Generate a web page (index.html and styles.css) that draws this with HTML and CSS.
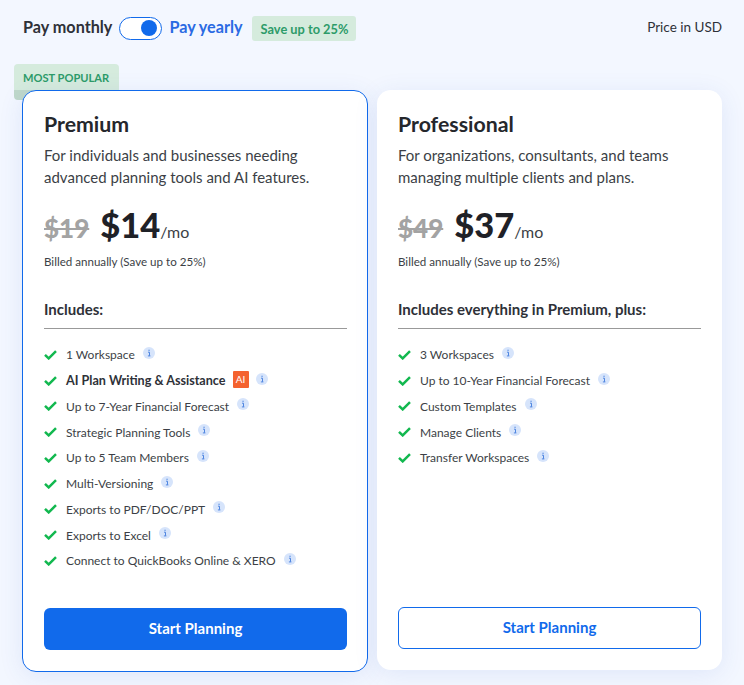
FILE: index.html
```html
<!DOCTYPE html>
<html lang="en">
<head>
    <meta charset="UTF-8">
    <title>Pricing</title>
    <link rel="stylesheet" href="styles.css">
</head>
<body>
<svg class="defs" width="0" height="0">
    <symbol id="check" viewBox="0 0 13 10"><path d="M1 4.8 4.7 8.4 12 1.2" fill="none" stroke="#12b84f" stroke-width="2.5"/></symbol>
    <symbol id="info" viewBox="0 0 12 12"><circle cx="6" cy="6" r="6" fill="#d6e4fb"/><path d="M5 5.2h1.5v3.6M4.9 8.9h2.5" fill="none" stroke="#4f86e0" stroke-width="1"/><rect x="5.5" y="2.7" width="1.1" height="1.2" fill="#4f86e0"/></symbol>
</svg>

<div class="topbar">
    <span class="pay_label">Pay monthly</span>
    <span class="toggle"><span class="toggle_dot"></span></span>
    <span class="pay_label pay_active">Pay yearly</span>
    <span class="save_tag">Save up to 25%</span>
    <span class="currency">Price in USD</span>
</div>

<div class="plans">
    <div class="plan plan_main">
        <span class="popular">MOST POPULAR</span>
        <h2>Premium</h2>
        <p class="desc">For individuals and businesses needing advanced planning tools and AI features.</p>
        <div class="price"><s>$19</s><b>$14</b><span>/mo</span></div>
        <p class="billed">Billed annually (Save up to 25%)</p>
        <h3>Includes:</h3>
        <ul>
            <li><svg class="ck"><use href="#check"/></svg>1 Workspace<svg class="inf"><use href="#info"/></svg></li>
            <li class="strong"><svg class="ck"><use href="#check"/></svg>AI Plan Writing &amp; Assistance<span class="ai">AI</span><svg class="inf"><use href="#info"/></svg></li>
            <li><svg class="ck"><use href="#check"/></svg>Up to 7-Year Financial Forecast<svg class="inf"><use href="#info"/></svg></li>
            <li><svg class="ck"><use href="#check"/></svg>Strategic Planning Tools<svg class="inf"><use href="#info"/></svg></li>
            <li><svg class="ck"><use href="#check"/></svg>Up to 5 Team Members<svg class="inf"><use href="#info"/></svg></li>
            <li><svg class="ck"><use href="#check"/></svg>Multi-Versioning<svg class="inf"><use href="#info"/></svg></li>
            <li><svg class="ck"><use href="#check"/></svg>Exports to PDF/DOC/PPT<svg class="inf"><use href="#info"/></svg></li>
            <li><svg class="ck"><use href="#check"/></svg>Exports to Excel<svg class="inf"><use href="#info"/></svg></li>
            <li><svg class="ck"><use href="#check"/></svg>Connect to QuickBooks Online &amp; XERO<svg class="inf"><use href="#info"/></svg></li>
        </ul>
        <a class="btn btn_fill" href="#">Start Planning</a>
    </div>

    <div class="plan">
        <h2>Professional</h2>
        <p class="desc">For organizations, consultants, and teams managing multiple clients and plans.</p>
        <div class="price"><s>$49</s><b>$37</b><span>/mo</span></div>
        <p class="billed">Billed annually (Save up to 25%)</p>
        <h3>Includes everything in Premium, plus:</h3>
        <ul>
            <li><svg class="ck"><use href="#check"/></svg>3 Workspaces<svg class="inf"><use href="#info"/></svg></li>
            <li><svg class="ck"><use href="#check"/></svg>Up to 10-Year Financial Forecast<svg class="inf"><use href="#info"/></svg></li>
            <li><svg class="ck"><use href="#check"/></svg>Custom Templates<svg class="inf"><use href="#info"/></svg></li>
            <li><svg class="ck"><use href="#check"/></svg>Manage Clients<svg class="inf"><use href="#info"/></svg></li>
            <li><svg class="ck"><use href="#check"/></svg>Transfer Workspaces<svg class="inf"><use href="#info"/></svg></li>
        </ul>
        <a class="btn btn_line" href="#">Start Planning</a>
    </div>
</div>
</body>
</html>
```
FILE: styles.css
```css
*{
    margin: 0;
    padding: 0;
    box-sizing: border-box;
}
body{
    background-color: #f3f7ff;
    font-family: "Lato", "Noto Sans", sans-serif;
    color: #2e3138;
    height: 685px;
    overflow: hidden;
}
.defs{
    display: block;
    height: 0;
}

.topbar{
    display: flex;
    align-items: center;
    height: 28px;
    margin: 14px 22px 0 23px;
}
.pay_label{
    padding-bottom: 3px;
    font-size: 16.2px;
    font-weight: 700;
}
.pay_active{
    color: #2a6ae3;
}
.toggle{
    display: flex;
    align-items: center;
    justify-content: flex-end;
    width: 43px;
    height: 23px;
    margin: 0 7px;
    padding-right: 4px;
    background-color: white;
    border: 1px solid #116aeb;
    border-radius: 12px;
}
.toggle_dot{
    width: 16px;
    height: 16px;
    background-color: #116aeb;
    border-radius: 50%;
}
.save_tag{
    display: flex;
    align-items: center;
    height: 25px;
    margin-left: 9px;
    padding: 2px 8px 0 9px;
    background-color: #d5ebdd;
    border-radius: 3px;
    color: #2d9b69;
    font-size: 12.8px;
    font-weight: 700;
}
.currency{
    margin-left: auto;
    padding-bottom: 2px;
    font-size: 13.5px;
}

.plans{
    display: flex;
    gap: 9px;
    margin: 48px 22px 0;
}
.plan{
    position: relative;
    display: flex;
    flex-direction: column;
    flex: 1;
    height: 580px;
    padding: 22px 21px 21px;
    background-color: white;
    border-radius: 14px;
    box-shadow: 0 4px 24px rgba(50, 90, 200, .1);
}
.plan_main{
    height: 582px;
    padding: 21px 20px 21px 21px;
    border: 1px solid #116aeb;
}
.popular{
    position: absolute;
    z-index: -1;
    left: -9px;
    top: -27px;
    width: 105px;
    height: 36px;
    padding: 7px 0 0 9px;
    background: linear-gradient(#d5ebdd 26px, #bfd8ca 26px);
    border-radius: 4px;
    color: #2d9b69;
    font-size: 11.1px;
    font-weight: 700;
}

h2{
    font-size: 21.3px;
    font-weight: 700;
    line-height: 24px;
    color: #25272c;
}
.desc{
    margin-top: 8px;
    font-size: 15px;
    line-height: 22px;
    color: #3c3f46;
}
.price{
    display: flex;
    align-items: baseline;
    height: 44px;
    margin-top: 16px;
}
.price s{
    margin-right: 11px;
    font-size: 26px;
    font-weight: 900;
    color: #a3a3a3;
}
.price b{
    font-size: 34.5px;
    font-weight: 900;
    color: #1f2127;
}
.price span{
    font-size: 16px;
    color: #3c3f46;
}
.billed{
    margin-top: 6px;
    font-size: 11.6px;
    line-height: 16px;
    color: #3c3f46;
}
h3{
    margin-top: 30px;
    padding-bottom: 10px;
    border-bottom: 1px solid #999;
    font-size: 15px;
    font-weight: 700;
    line-height: 18px;
    color: #2e3138;
}

ul{
    flex: 1;
    margin-top: 13px;
    list-style: none;
}
li{
    display: flex;
    align-items: center;
    height: 25.75px;
    font-size: 12px;
    color: #3c3f46;
}
li.strong{
    font-size: 12.6px;
    font-weight: 700;
    color: #2e3138;
}
.ck{
    width: 13px;
    height: 10px;
    margin-right: 9px;
}
.inf{
    width: 12px;
    height: 12px;
    margin: -4px 0 0 8px;
}
.ai{
    display: flex;
    align-items: center;
    justify-content: center;
    width: 16px;
    height: 17px;
    margin: -3px 0 0 7px;
    background-color: #f4622f;
    border-radius: 1px;
    color: white;
    font-size: 10px;
    font-weight: 400;
}
.ai + .inf{
    margin-left: 7px;
}

.btn{
    display: flex;
    align-items: center;
    justify-content: center;
    height: 42px;
    padding-bottom: 2px;
    border-radius: 6px;
    font-size: 15px;
    font-weight: 700;
    text-decoration: none;
}
.btn_fill{
    background-color: #116aeb;
    color: white;
}
.btn_line{
    background-color: white;
    border: 1px solid #116aeb;
    color: #116aeb;
}
```
